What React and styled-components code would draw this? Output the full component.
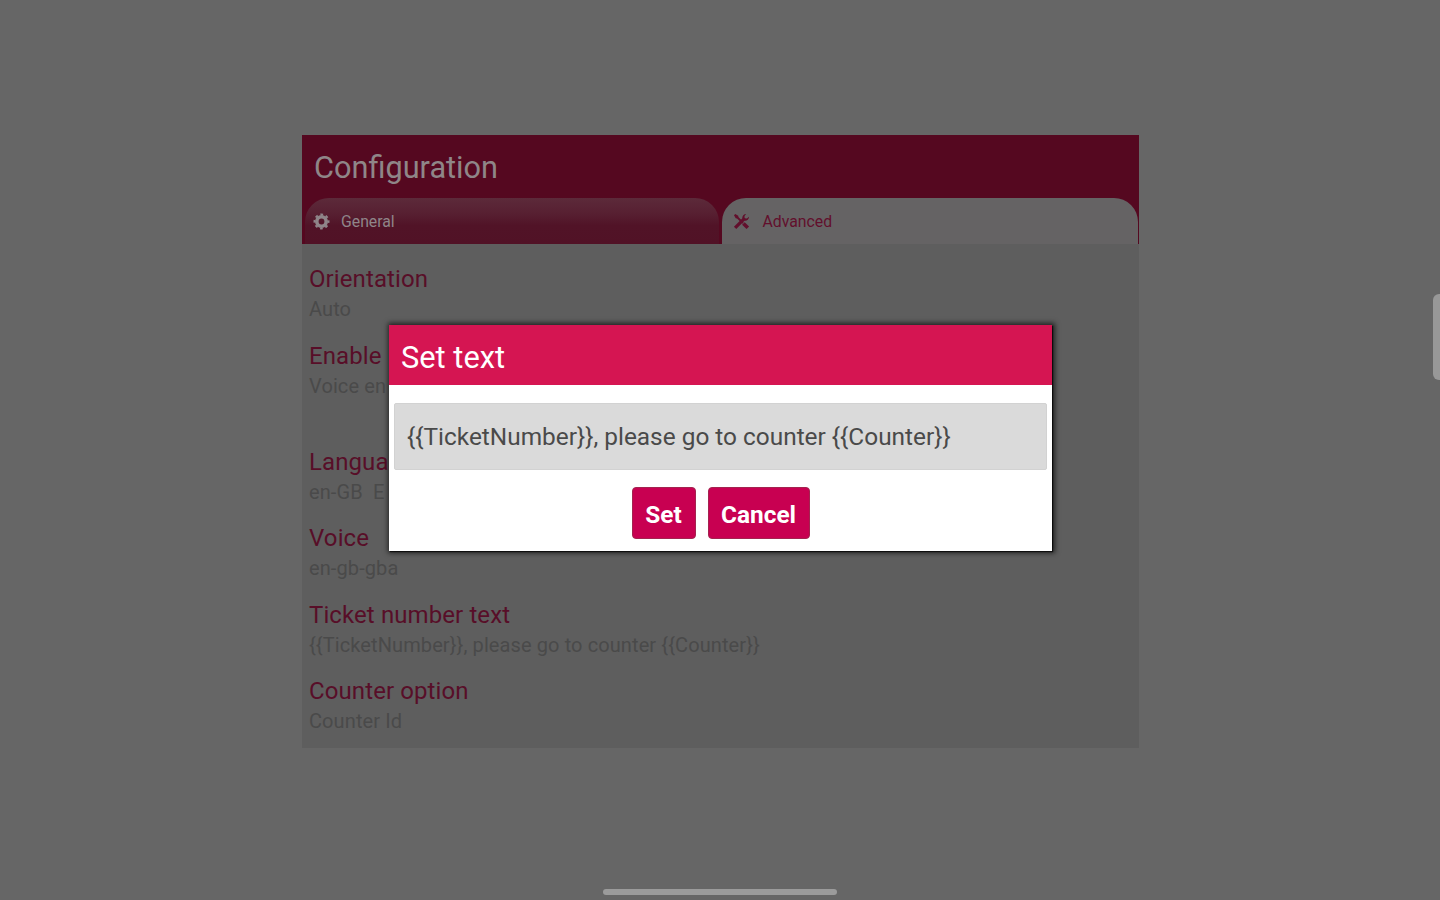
import React from "react";
import styled, { createGlobalStyle } from "styled-components";

const GlobalStyle = createGlobalStyle`
  * {
    box-sizing: border-box;
  }

  body {
    margin: 0;
    background-color: #666666;
    font-family: Roboto, "Liberation Sans", sans-serif;
  }
`;

const Screen = styled.div`
  position: relative;
  width: 1440px;
  height: 900px;
  padding-top: 135px;
  overflow: hidden;
  background-color: #666666;
`;

const Panel = styled.main`
  width: 837px;
  height: 613px;
  margin-left: 302px;
  background-color: #5e5e5e;
`;

const PanelHeader = styled.header`
  height: 109px;
  background-color: #550820;
`;

const PanelTitle = styled.h1`
  margin: 0;
  height: 63px;
  padding: 1px 12px 0;
  color: #8f8688;
  font-size: 30.7px;
  font-weight: 400;
  line-height: 64px;
`;

const Tabs = styled.nav`
  display: flex;
  gap: 3px;
  height: 46px;
  padding: 0 1px 0 3px;
`;

const Tab = styled.div`
  display: flex;
  flex: 1;
  align-items: center;
  gap: ${(props) => (props.$active ? "13px" : "11px")};
  padding: 1px 0 0 ${(props) => (props.$active ? "11px" : "8px")};
  border-radius: 24px 24px 0 0;
  color: ${(props) => (props.$active ? "#620f2c" : "#8f8589")};
  background: ${(props) =>
    props.$active
      ? "#656364"
      : "linear-gradient(#5c2a3a 0%, #571f31 35%, #511327 60%, #511226 100%)"};
  font-size: 15.8px;

  svg {
    width: 17px;
    height: 17px;
  }
`;

const Options = styled.div`
  padding: 20px 7px 0;
`;

const Option = styled.section`
  height: ${(props) => (props.$tall ? "106px" : "76.5px")};
`;

const OptionTitle = styled.h2`
  margin: 0;
  color: #580e28;
  font-size: 24px;
  font-weight: 400;
  line-height: 31px;
  letter-spacing: 0.1px;
  white-space: nowrap;
`;

const OptionValue = styled.p`
  margin: 0;
  color: #4a4a4a;
  font-size: 20px;
  line-height: 29px;
  letter-spacing: 0.1px;
  white-space: pre;
`;

const Dialog = styled.div`
  position: absolute;
  top: 325px;
  left: 389px;
  width: 663px;
  height: 226px;
  background-color: #ffffff;
  box-shadow: 1px 0 5px 2px rgba(0, 0, 0, 0.65), 1px 1px 1px #1c1c1c;
`;

const DialogTitle = styled.h2`
  margin: 0;
  height: 60px;
  padding: 1px 12px 0;
  color: #ffffff;
  background-color: #d51552;
  font-size: 30.8px;
  font-weight: 400;
  line-height: 64px;
`;

const TextField = styled.input`
  display: block;
  width: 653px;
  height: 67px;
  margin: 18px 0 0 5px;
  padding: 0 12px;
  border: 1px solid #d2d2d2;
  border-radius: 2px;
  outline: none;
  color: #4a4a4a;
  background-color: #dadada;
  font-family: inherit;
  font-size: 24.4px;
`;

const Actions = styled.div`
  display: flex;
  justify-content: center;
  gap: 12px;
  padding-top: 17px;
`;

const Button = styled.button`
  width: ${(props) => props.$width}px;
  height: 52px;
  padding: 3px 0 0;
  border: 1px solid #a3244f;
  border-radius: 4px;
  color: #ffffff;
  background-color: #c80051;
  font-family: inherit;
  font-size: 24.4px;
  font-weight: 700;
`;

const EdgeHandle = styled.div`
  position: absolute;
  top: 294px;
  right: -6px;
  width: 13px;
  height: 86px;
  border-radius: 6px;
  background-color: #989898;
`;

const NavHandle = styled.div`
  position: absolute;
  left: 603px;
  bottom: 5px;
  width: 234px;
  height: 6px;
  border-radius: 3px;
  background-color: #9b9b9b;
`;

const GearIcon = () => (
  <svg viewBox="0 0 17 17" fill="none" stroke="currentColor">
    <circle cx="8.5" cy="8.5" r="4.7" strokeWidth="3.6" />
    <circle
      cx="8.5"
      cy="8.5"
      r="7"
      strokeWidth="2"
      strokeDasharray="2.75 2.75"
      strokeDashoffset="1.37"
    />
  </svg>
);

// screwdriver from the top left crossing a wrench from the top right
const ToolsIcon = () => (
  <svg viewBox="0 0 17 17" fill="none" stroke="currentColor">
    <path d="M1 2.2L2.3 1L5.2 2.7L5.4 4.3L4.3 5.4L2.7 5.2Z" fill="currentColor" stroke="none" />
    <path d="M4 4L10 10" strokeWidth="1.8" />
    <path d="M10.4 10.4L14.8 14.8" strokeWidth="3.6" />
    <path d="M2.1 14.9L11.6 5.4" strokeWidth="3.2" />
    <path
      d="M13.2 .9A4 4 0 0 0 9.3 5.3L11.7 7.7A4 4 0 0 0 16.1 3.8L13.9 5.4L11.6 5.3L11.5 3.1Z"
      fill="currentColor"
      stroke="none"
    />
  </svg>
);

const ticketText = "{{TicketNumber}}, please go to counter {{Counter}}";

const options = [
  { title: "Orientation", value: "Auto" },
  { title: "Enable", value: "Voice en", tall: true },
  { title: "Langua", value: "en-GB  E" },
  { title: "Voice", value: "en-gb-gba" },
  { title: "Ticket number text", value: ticketText },
  { title: "Counter option", value: "Counter Id" },
];

const App = () => {
  return (
    <>
      <GlobalStyle />
      <Screen>
        <Panel>
          <PanelHeader>
            <PanelTitle>Configuration</PanelTitle>
            <Tabs>
              <Tab>
                <GearIcon />
                <span>General</span>
              </Tab>
              <Tab $active>
                <ToolsIcon />
                <span>Advanced</span>
              </Tab>
            </Tabs>
          </PanelHeader>
          <Options>
            {options.map((option) => (
              <Option key={option.title} $tall={option.tall}>
                <OptionTitle>{option.title}</OptionTitle>
                <OptionValue>{option.value}</OptionValue>
              </Option>
            ))}
          </Options>
        </Panel>
        <Dialog>
          <DialogTitle>Set text</DialogTitle>
          <TextField defaultValue={ticketText} />
          <Actions>
            <Button $width={64}>Set</Button>
            <Button $width={102}>Cancel</Button>
          </Actions>
        </Dialog>
        <EdgeHandle />
        <NavHandle />
      </Screen>
    </>
  );
};

export default App;
